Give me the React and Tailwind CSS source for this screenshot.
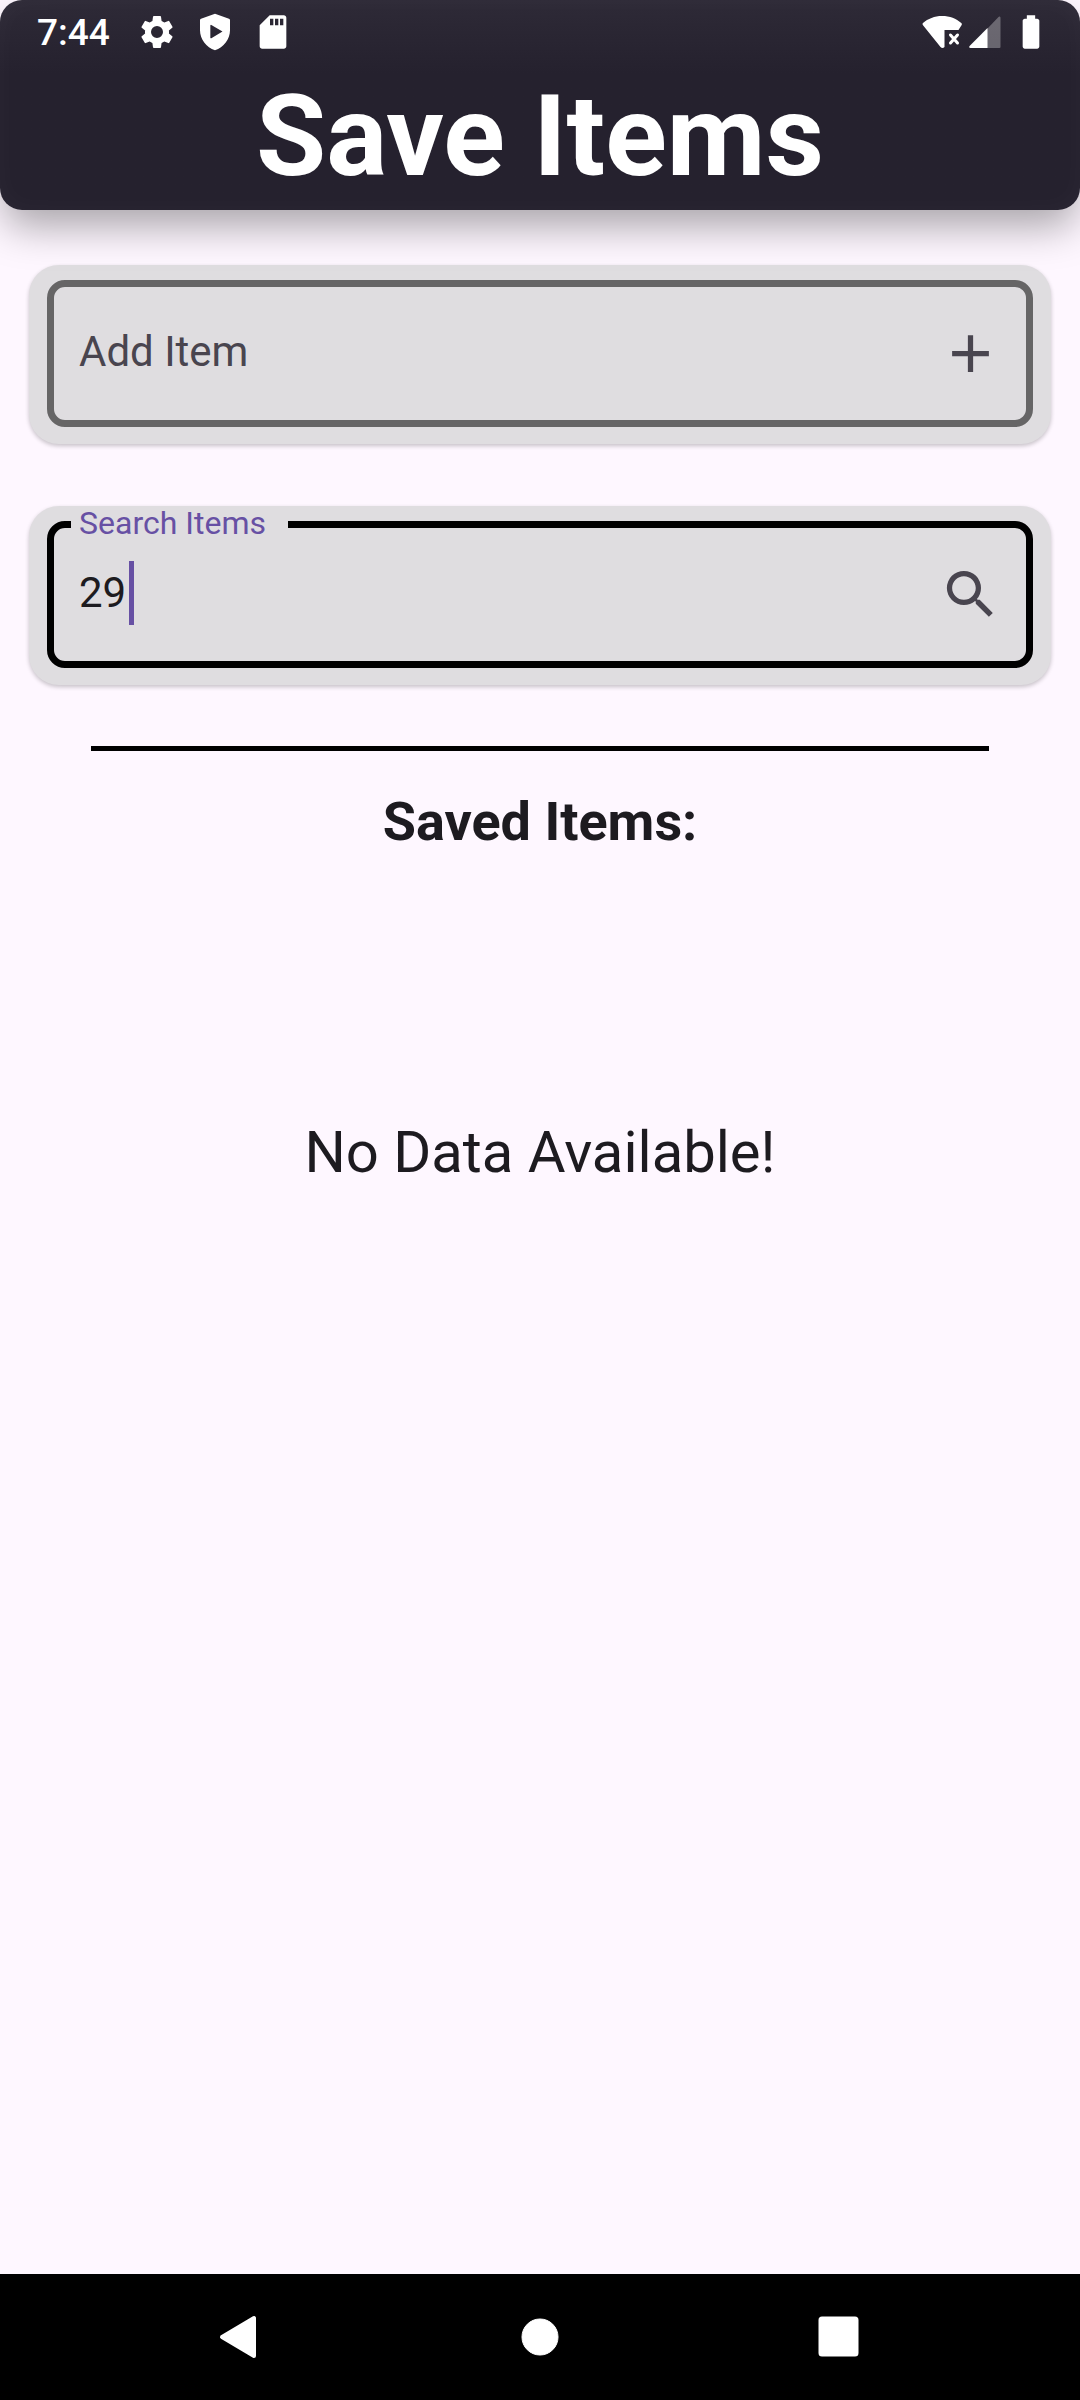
import React from "react";

function StatusBar() {
  return (
    <div className="flex h-16 items-center justify-between pr-[29px] pl-[37px] text-white">
      <div className="flex items-center">
        <span className="w-[100px] pt-px text-[37px] leading-[44px] font-medium">7:44</span>
        <svg viewBox="0 0 24 24" className="h-10 w-10" fill="currentColor" aria-hidden="true">
          <path d="M19.14 12.94c.04-.3.06-.61.06-.94 0-.32-.02-.64-.07-.94l2.03-1.58a.49.49 0 0 0 .12-.61l-1.92-3.32a.49.49 0 0 0-.59-.22l-2.39.96c-.5-.38-1.03-.7-1.62-.94L14.4 2.81a.48.48 0 0 0-.48-.41h-3.84c-.24 0-.43.17-.47.41l-.36 2.54c-.59.24-1.13.57-1.62.94l-2.39-.96a.48.48 0 0 0-.59.22L2.74 8.87a.47.47 0 0 0 .12.61l2.03 1.58c-.05.3-.09.63-.09.94s.02.64.07.94l-2.03 1.58a.49.49 0 0 0-.12.61l1.92 3.32c.12.22.37.29.59.22l2.39-.96c.5.38 1.03.7 1.62.94l.36 2.54c.05.24.24.41.48.41h3.84c.24 0 .44-.17.47-.41l.36-2.54c.59-.24 1.13-.56 1.62-.94l2.39.96c.22.08.47 0 .59-.22l1.92-3.32a.47.47 0 0 0-.12-.61zM12 15.6A3.6 3.6 0 1 1 12 8.4a3.6 3.6 0 0 1 0 7.2z" />
        </svg>
        <svg viewBox="0 0 24 24" className="ml-[18px] h-10 w-10" fill="currentColor" fillRule="evenodd" aria-hidden="true">
          <path d="M12 1 3.6 4a1 1 0 0 0-.6.9V11c0 5.5 3.8 10.200 9 12 5.200-1.800 9-6.500 9-12V4.900a1 1 0 0 0-.6-.9zM9.200 8.100a.4.4 0 0 1 .6-.35l6.700 4-6.700 4a.4.4 0 0 1-.6-.35z" />
        </svg>
        <svg viewBox="0 0 24 24" className="ml-[18px] h-10 w-10" fill="currentColor" fillRule="evenodd" aria-hidden="true">
          <path d="M18.500 2H10L4 8v12.500C4 21.300 4.700 22 5.500 22h13c.8 0 1.500-.7 1.500-1.500v-17c0-.8-.7-1.500-1.500-1.500zM12.200 8h-2V4h2zm3 0h-2V4h2zm3 0h-2V4h2z" />
        </svg>
      </div>
      <div className="flex items-center">
        <svg viewBox="0 0 40 34" className="h-[34px] w-10" fill="currentColor" aria-hidden="true">
          <path d="M20 1C12.500 1 6 3.700 1 8q-1 1 0 2.300L18.500 32q2 2 4 0V15h14l3-4.700q.8-1.300-.2-2.300C34 3.500 28 1 20 1z" />
          <path d="m28.500 20 7 8m0-8-7 8" stroke="currentColor" strokeWidth="3" strokeLinecap="round" />
        </svg>
        <svg viewBox="0 0 32 32" className="ml-[7px] h-8 w-8" fill="currentColor" aria-hidden="true">
          <path d="M18 13v19h12.500a1 1 0 0 0 1-1V2c0-1.500-1-2-2-1z" className="opacity-30" />
          <path d="M18.500 12v20H1.500Q-.5 31.500.6 30z" />
        </svg>
        <svg viewBox="0 0 24 24" className="ml-[10px] h-10 w-10" fill="currentColor" aria-hidden="true">
          <path d="M15.700 4H14.500V2h-5v2H8.300C7.600 4 7 4.600 7 5.300v15.400c0 .7.600 1.300 1.300 1.300h7.400c.7 0 1.300-.6 1.300-1.300V5.300c0-.7-.6-1.300-1.300-1.300z" />
        </svg>
      </div>
    </div>
  );
}

function FieldCard({ children }) {
  return (
    <div className="rounded-[30px] bg-[#dfdde0] px-[18px] pt-[15px] pb-[17px] shadow-[0_2px_4px_rgba(0,0,0,0.22)]">
      {children}
    </div>
  );
}

function NavButton({ label, children }) {
  return (
    <button type="button" aria-label={label} className="flex h-full items-center justify-center">
      <svg viewBox="0 0 44 44" className="h-11 w-11" fill="white" stroke="white" strokeLinejoin="round" aria-hidden="true">
        {children}
      </svg>
    </button>
  );
}

export default function App() {
  return (
    <div className="flex min-h-screen flex-col bg-[#fef7ff] font-[Roboto,sans-serif] text-[#1d1b20]">
      <header className="relative z-10 rounded-[22px] bg-linear-to-b from-[#2e2a37] to-[#25212e] to-35% pb-[5px] shadow-[0_20px_40px_-4px_rgba(0,0,0,0.34),inset_0_0_28px_rgba(255,255,255,0.03)]">
        <StatusBar />
        <h1 className="pt-1 text-center text-[114px] leading-[137px] font-bold text-white">Save Items</h1>
      </header>

      <main className="flex flex-1 flex-col px-[29px] pt-[55px]">
        <FieldCard>
          <div className="flex h-[147px] items-center rounded-[18px] border-[7px] border-[#666566] pr-6 pl-[25px]">
            <input
              type="text"
              aria-label="Add Item"
              placeholder="Add Item"
              className="min-w-0 flex-1 bg-transparent pb-1 text-[42px] leading-[64px] outline-none placeholder:text-[#49454f]"
            />
            <button type="button" aria-label="Add" className="text-[#49454f]">
              <svg viewBox="0 0 24 24" className="h-[63px] w-[63px]" fill="currentColor" aria-hidden="true">
                <path d="M19 13h-6v6h-2v-6H5v-2h6V5h2v6h6z" />
              </svg>
            </button>
          </div>
        </FieldCard>

        <div className="mt-[62px]">
          <FieldCard>
            <div className="relative flex h-[147px] items-center rounded-[18px] border-[7px] border-black pr-6 pl-[25px]">
              <label
                htmlFor="search"
                className="absolute -top-5 left-[17px] bg-[#dfdde0] pr-[22px] pl-2 text-[32px] leading-[30px] text-[#6750a4]"
              >
                Search Items
              </label>
              <div className="relative min-w-0 flex-1 pb-1">
                <input
                  id="search"
                  type="text"
                  defaultValue="29"
                  className="w-full bg-transparent text-[42px] leading-[64px] caret-transparent outline-none"
                />
                <span className="absolute top-0 left-[50px] h-16 w-[5px] bg-[#6750a4]" />
              </div>
              <button type="button" aria-label="Search" className="text-[#49454f]">
                <svg viewBox="0 0 24 24" className="h-[63px] w-[63px]" fill="currentColor" aria-hidden="true">
                  <path d="M15.500 14h-.79l-.28-.27A6.470 6.470 0 0 0 16 9.500 6.500 6.500 0 1 0 9.500 16c1.610 0 3.090-.59 4.230-1.570l.27.28v.79l5 4.990L20.490 19zm-6 0C7.010 14 5 11.990 5 9.500S7.010 5 9.500 5 14 7.010 14 9.500 11.990 14 9.500 14z" />
                </svg>
              </button>
            </div>
          </FieldCard>
        </div>

        <hr className="mx-[62px] mt-[61px] border-t-[5px] border-black" />
        <h2 className="mt-[39px] text-center text-[54px] leading-[64px] font-bold">Saved Items:</h2>
        <p className="mt-[263px] text-center text-[58px] leading-[70px]">No Data Available!</p>
      </main>

      <nav className="grid h-[126px] grid-cols-3 bg-black px-[90px]">
        <NavButton label="Back">
          <path d="M4 22 36 3v38z" strokeWidth="4" />
        </NavButton>
        <NavButton label="Home">
          <circle cx="22" cy="22" r="18" />
        </NavButton>
        <NavButton label="Recent apps">
          <rect x="2" y="3" width="37" height="37" rx="2" strokeWidth="3" />
        </NavButton>
      </nav>
    </div>
  );
}
